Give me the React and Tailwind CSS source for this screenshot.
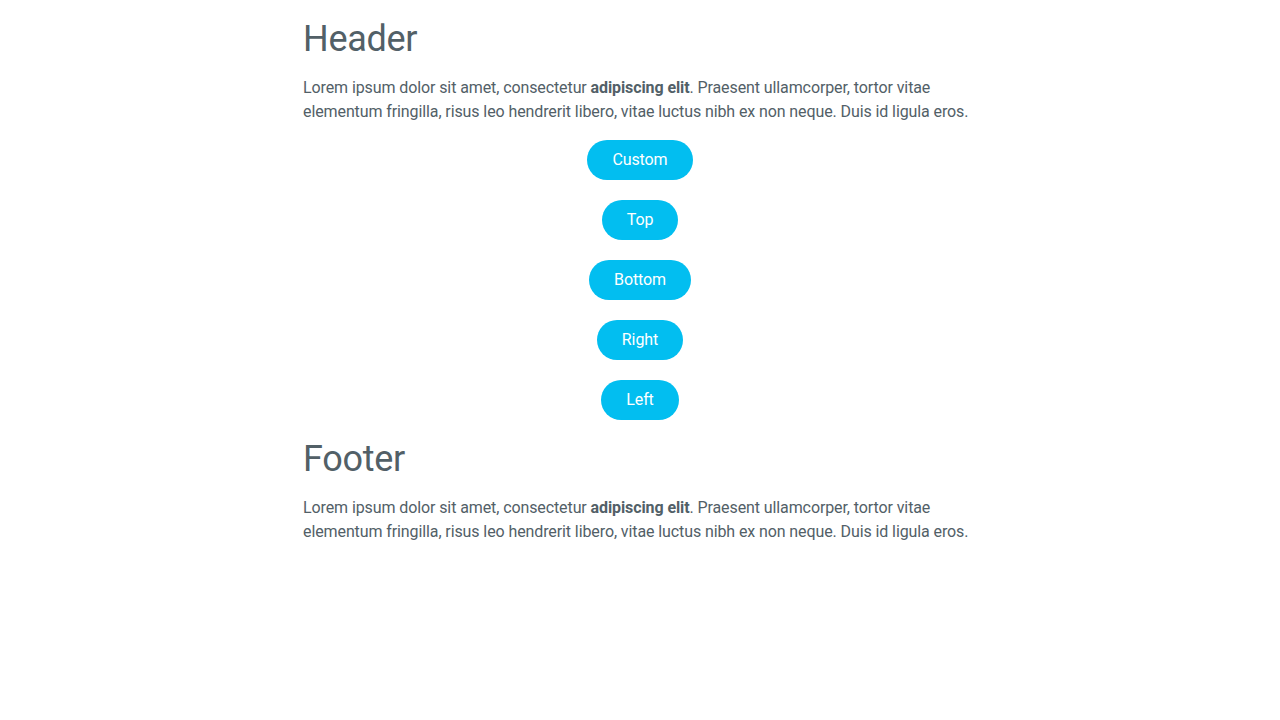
const LOREM_START = 'Lorem ipsum dolor sit amet, consectetur ';
const LOREM_END =
    '. Praesent ullamcorper, tortor vitae elementum fringilla, risus leo hendrerit libero, vitae luctus nibh ex non neque. Duis id ligula eros.';

const BUTTONS = ['Custom', 'Top', 'Bottom', 'Right', 'Left'];

function Lorem() {
    return (
        <p className="mt-[15px] text-base leading-6 tracking-[-0.1px]">
            {LOREM_START}
            <b className="font-bold">adipiscing elit</b>
            {LOREM_END}
        </p>
    );
}

export default function App() {
    return (
        <div
            className="min-h-screen bg-white text-[#526067]"
            style={{ fontFamily: 'Roboto, "Noto Sans", sans-serif' }}
        >
            <div className="mx-auto w-[674px] pt-[18px]">
                <h1 className="text-[36px] font-normal leading-[43px] tracking-[-0.3px]">Header</h1>
                <Lorem />
                <div className="mt-4 flex flex-col items-center gap-5">
                    {BUTTONS.map((label) => (
                        <button
                            key={label}
                            className="h-10 rounded-full bg-[#02bef0] px-[25px] text-base tracking-[-0.1px] text-white"
                        >
                            {label}
                        </button>
                    ))}
                </div>
                <h1 className="mt-[18px] text-[36px] font-normal leading-[43px] tracking-[-0.3px]">Footer</h1>
                <Lorem />
            </div>
        </div>
    );
}
